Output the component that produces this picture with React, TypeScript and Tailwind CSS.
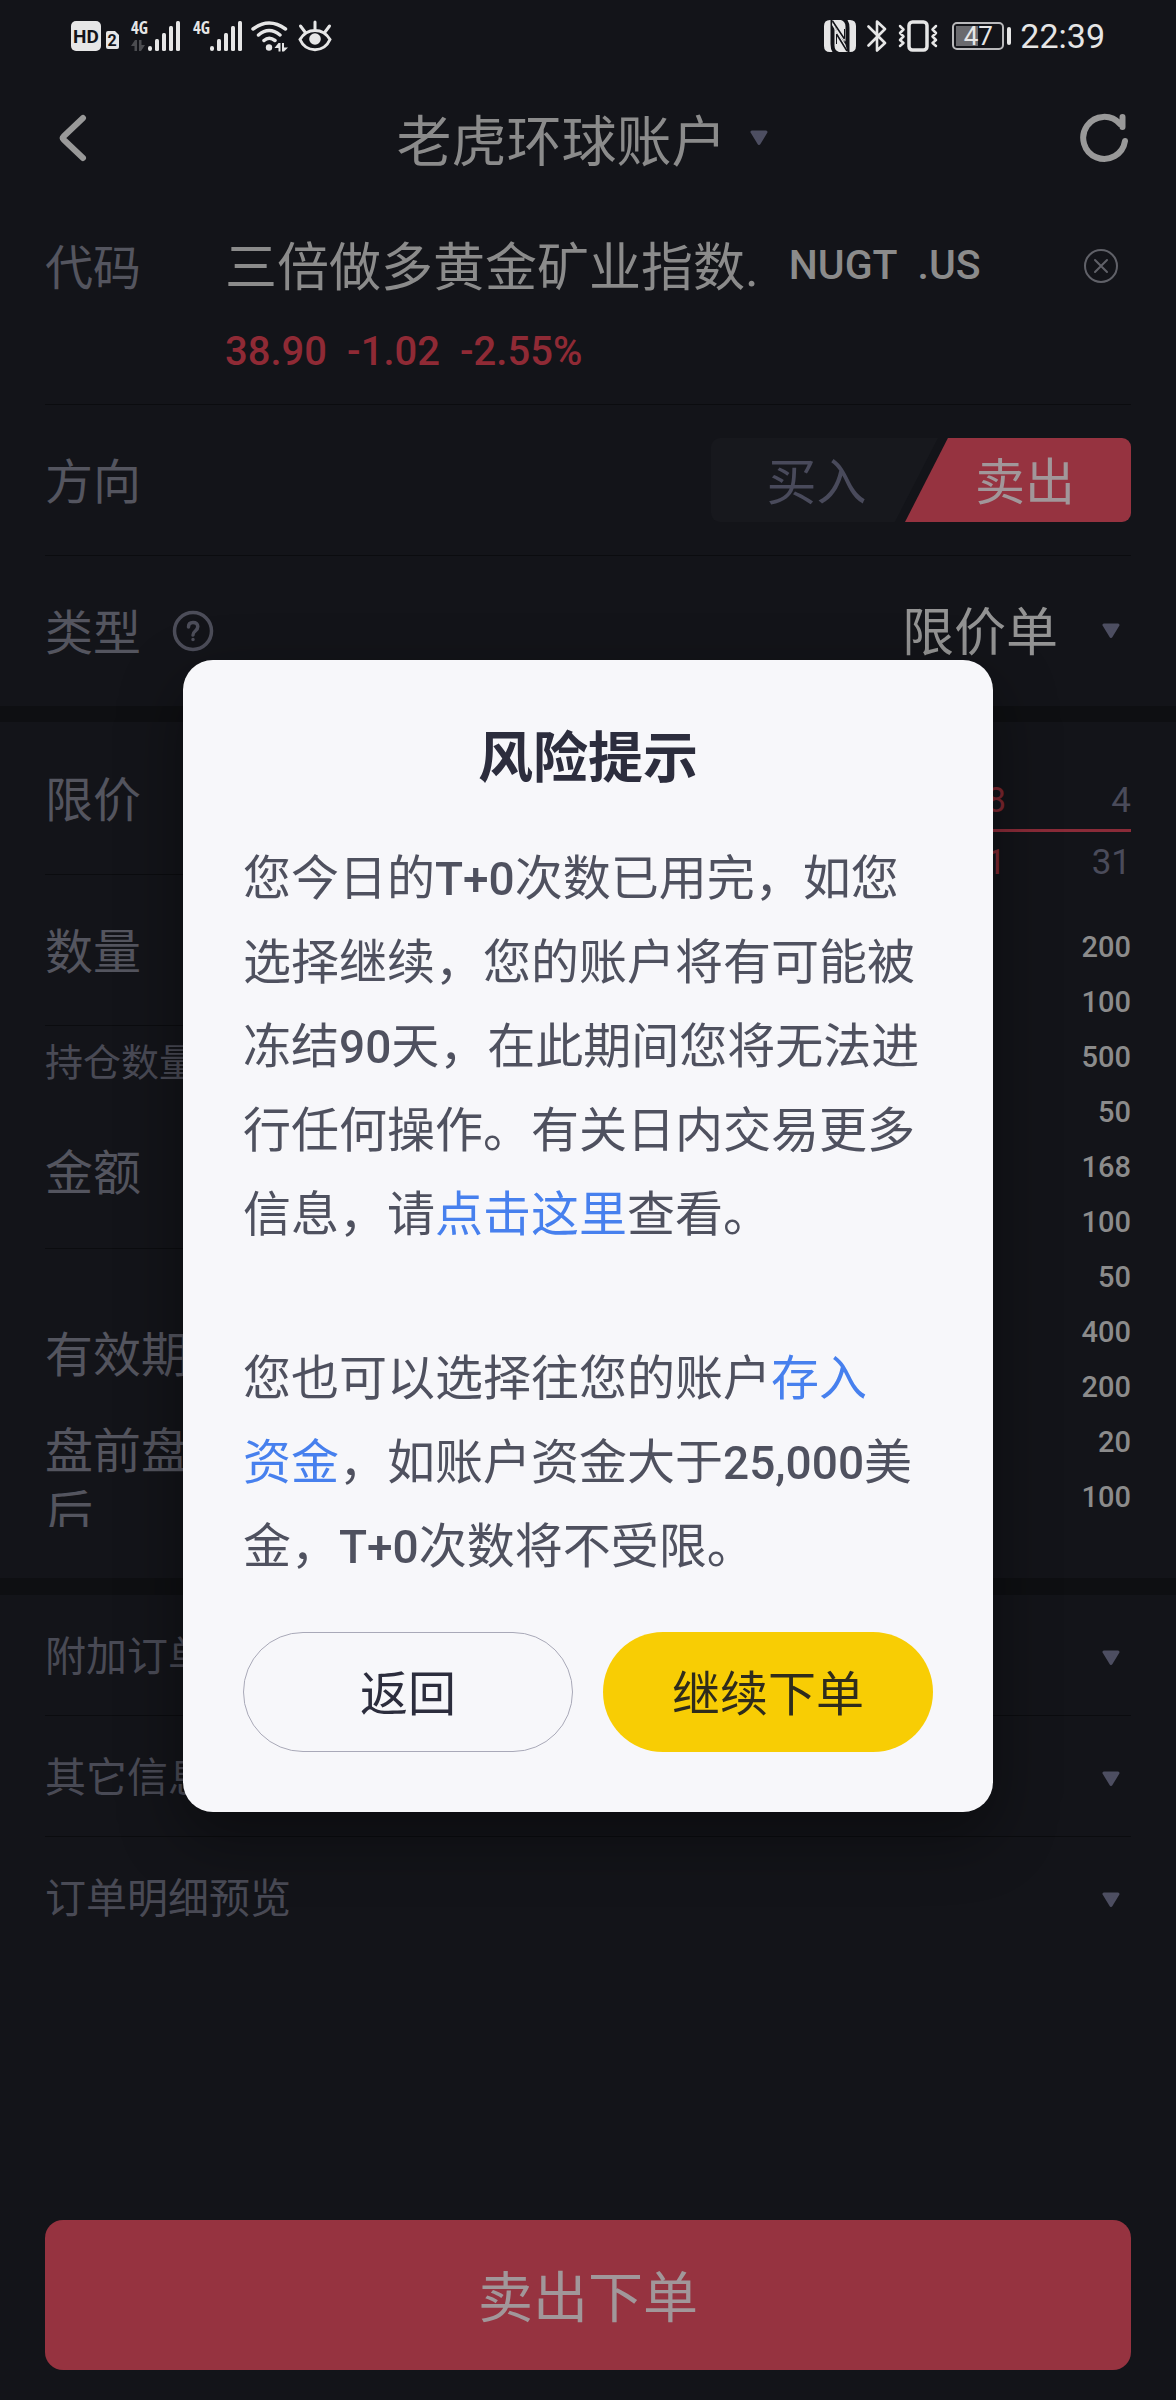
import type { ReactNode } from "react";

const bookSizes = [200, 100, 500, 50, 168, 100, 50, 400, 200, 20, 100];
const foldedSections = ["附加订单", "其它信息", "订单明细预览"];

function Caret() {
  return (
    <svg width="18" height="16" viewBox="0 0 18 16" className="shrink-0" aria-hidden="true">
      <path d="M2 2h14L9 13.5z" fill="#4d4e61" stroke="#4d4e61" strokeWidth="3" strokeLinejoin="round" />
    </svg>
  );
}

function Signal({ arrows = false }: { arrows?: boolean }) {
  return (
    <svg width="51" height="32" viewBox="0 0 51 32" className="overflow-visible" fill="#e6e6e6" aria-hidden="true">
      <text x="0" y="14" fontSize="17" fontWeight="700" fontFamily="'Open Sans Condensed', Roboto, sans-serif">
        4G
      </text>
      {arrows && <path d="M0 26l4-6h2v11H3.5v-5zM8 20h2.5v5h3.5l-4 6H8z" fill="#4b4c50" />}
      <rect x="17" y="26" width="4" height="5" rx="2" />
      <rect x="24" y="19" width="4" height="12" rx="1.5" />
      <rect x="31" y="13" width="4" height="18" rx="1.5" />
      <rect x="38" y="6" width="4" height="25" rx="1.5" />
      <rect x="45" y="1" width="4" height="30" rx="1.5" />
    </svg>
  );
}

function StatusBar() {
  return (
    <div className="flex h-[72px] items-center justify-between px-[71px] text-[#e6e6e6]">
      <div className="flex items-center">
        <svg width="49" height="32" viewBox="0 0 49 32" fill="#e6e6e6" aria-hidden="true">
          <rect x="0" y="1" width="30" height="30" rx="5" />
          <text x="15" y="23" fontSize="19" fontWeight="700" textAnchor="middle" fill="#131419">
            HD
          </text>
          <path d="M37 11h7l4 4v12a2 2 0 0 1-2 2h-9a2 2 0 0 1-2-2V13a2 2 0 0 1 2-2z" />
          <text x="41" y="26" fontSize="16" fontWeight="700" textAnchor="middle" fill="#131419">
            2
          </text>
        </svg>
        <div className="ml-[11px] flex gap-[11px]">
          <Signal arrows />
          <Signal />
        </div>
        <svg width="38" height="32" viewBox="0 0 38 32" className="ml-[7px]" fill="none" stroke="#e6e6e6" strokeWidth="3.5" strokeLinecap="round" aria-hidden="true">
          <path d="M2 9Q18 -3 34.5 9M7.5 15Q18 6 29 15M13 20.5Q18 16 24 20.5" />
          <circle cx="18" cy="27.5" r="3.2" fill="#e6e6e6" stroke="none" />
          <path d="M23.5 28l4-5h2v8.5h-2V28zM31 23h2v4.5h4L33 31.5h-2z" fill="#e6e6e6" stroke="none" />
        </svg>
        <svg width="34" height="32" viewBox="0 0 34 32" className="ml-[9px]" fill="none" stroke="#e6e6e6" strokeWidth="3" strokeLinecap="round" aria-hidden="true">
          <path d="M2 19.5C9 7.5 25 7.5 32 19.5C26 33 8 33 2 19.5z" />
          <path d="M17 9V2M7 12L2.5 6M27 12l4.5-6" />
          <circle cx="17" cy="19" r="5.8" fill="#e6e6e6" stroke="none" />
        </svg>
      </div>

      <div className="flex items-center">
        <svg width="32" height="32" viewBox="0 0 32 32" fill="#e6e6e6" aria-hidden="true">
          <path d="M6 0h.5v24q0 5 2 8H6q-6 0-6-6V6q0-6 6-6z" />
          <path d="M8.5 0h8.500q4.500 1.500 4.500 6.500V21.500L12 9z" />
          <path d="M10.500 8.500L23.500 32H15q-4.500-1.500-4.500-6.500z" />
          <path d="M8.500 0L12 9l9.500 15.500L23.500 32 18 22 8 5z" />
          <path d="M26 32h-.5V8q0-5-2-8H26q6 0 6 6v20q0 6-6 6z" />
          <path d="M13 12.500l7.500 9.500v-6L12.500 5.500z" />
          <path d="M12.500 14.500V24M20.500 18V9" stroke="#131419" strokeWidth="1" />
          <path d="M8.500 1L20.500 19M12.500 14L23 31" fill="none" stroke="#131419" strokeWidth="1.500" />
        </svg>
        <svg width="20" height="32" viewBox="0 0 20 32" className="ml-[11px]" fill="none" stroke="#e6e6e6" strokeWidth="2.6" strokeLinecap="round" strokeLinejoin="round" aria-hidden="true">
          <path d="M1.500 6.500L18 23l-8 7.500V1.500L18 9L1.500 25.500" />
        </svg>
        <svg width="40" height="32" viewBox="0 0 40 32" className="ml-[11px]" fill="none" stroke="#e6e6e6" strokeLinecap="round" strokeLinejoin="round" aria-hidden="true">
          <rect x="11" y="2" width="18" height="28" rx="3.5" strokeWidth="3.5" />
          <path d="M2 6l3.500 3.500L2 13l3.500 3.500L2 20l3.500 3L2 26M38 6l-3.500 3.500L38 13l-3.500 3.500L38 20l-3.500 3L38 26" strokeWidth="2.5" />
        </svg>
        <div className="ml-[14px] flex items-center gap-[3px]">
          <div className="relative flex h-[28px] w-[52px] items-center justify-center rounded-[5px] border-2 border-[#b9b9bb]">
            <span className="absolute top-[2px] bottom-[2px] left-[2px] w-[22px] bg-[#6a6a6e]" />
            <span className="relative text-[26px] leading-[24px]">47</span>
          </div>
          <span className="h-[18px] w-[4px] rounded-full bg-[#e6e6e6]" />
        </div>
        <span className="ml-[9px] text-[34px] leading-[40px]">22:39</span>
      </div>
    </div>
  );
}

function Label({ children }: { children: ReactNode }) {
  return <span className="pt-[5px] text-[48px] leading-[62px] text-[#54555f]">{children}</span>;
}

function RiskDialog() {
  return (
    <div className="fixed inset-0 flex items-center justify-center px-[183px] pt-[71px]">
      <section
        role="dialog"
        aria-modal="true"
        aria-labelledby="risk-title"
        className="w-full rounded-[30px] bg-[#f7f7fa] px-[60px] pt-[56px] pb-[60px] shadow-[0_24px_64px_rgba(0,0,0,0.4)]"
      >
        <h2 id="risk-title" className="text-center text-[55px] leading-[84px] font-bold text-[#2c2d3d]">
          风险提示
        </h2>
        <div className="mt-[37px] text-[48px] leading-[84px] text-[#4f515f]">
          <p>
            您今日的<span className="text-[46px] font-medium">T+0</span>次数已用完，如您选择继续，您的账户将有可能被冻结
            <span className="text-[46px] font-medium">90</span>天，在此期间您将无法进行任何操作。有关日内交易更多信息，请
            <a href="#day-trading" className="text-[#4780ee]">点击这里</a>查看。
          </p>
          <p className="mt-[80px]">
            您也可以选择往您的账户
            <a href="#deposit" className="text-[#4780ee]">
              存入
              <br />
              资金
            </a>
            ，如账户资金大于<span className="text-[46px] font-medium">25,000</span>美金，
            <span className="text-[46px] font-medium">T+0</span>次数将不受限。
          </p>
        </div>
        <div className="mt-[43px] grid grid-cols-2 gap-[30px] text-[48px] text-[#2c2d3d]">
          <button type="button" className="h-[120px] rounded-full border border-[#a9a9b8] pt-[6px]">
            返回
          </button>
          <button type="button" className="h-[120px] rounded-full bg-[#f8cd04] pt-[6px] text-[#2f2c1c]">
            继续下单
          </button>
        </div>
      </section>
    </div>
  );
}

export default function App() {
  return (
    <div className="flex min-h-screen flex-col bg-[#131419] font-[Roboto,'Noto_Sans_CJK_SC',sans-serif] text-[#8b8b8b]">
      <StatusBar />

      <header className="grid h-[132px] grid-cols-[1fr_auto_1fr] items-center px-[45px]">
        <button type="button" aria-label="返回上一页" className="ml-[12px] justify-self-start">
          <svg width="30" height="50" viewBox="0 0 30 50" fill="none" stroke="#999" strokeWidth="6" strokeLinecap="round" strokeLinejoin="round">
            <path d="M26 5L6.500 23.500Q5 25 6.500 26.500L26 45" />
          </svg>
        </button>
        <div className="flex items-center gap-[22px] pr-[12px]">
          <select aria-label="账户" className="appearance-none bg-transparent pt-[7px] text-[55px] leading-[80px]">
            <option>老虎环球账户</option>
          </select>
          <Caret />
        </div>
        <button type="button" aria-label="刷新" className="justify-self-end">
          <svg width="54" height="52" viewBox="0 0 54 52" fill="none" stroke="#999" strokeWidth="6" strokeLinecap="round">
            <path d="M48 29A21 21 0 1 1 43 12M45.500 5v10" strokeLinejoin="round" />
          </svg>
        </button>
      </header>

      <main className="flex flex-1 flex-col">
        <div className="px-[45px]">
          <div className="flex border-b border-[#0b0c0f] pt-[20px] pb-[12px]">
            <div className="flex h-[84px] w-[180px] items-center">
              <Label>代码</Label>
            </div>
            <div className="flex-1">
              <div className="flex h-[84px] items-center">
                <span className="pt-[5px] text-[52px] leading-[60px]">三倍做多黄金矿业指数.</span>
                <span className="ml-[30px] text-[41px] font-medium">NUGT</span>
                <span className="ml-[20px] text-[41px] font-medium">.US</span>
                <button type="button" aria-label="清除代码" className="mr-[12px] ml-auto">
                  <svg width="36" height="36" viewBox="0 0 36 36" fill="none" stroke="#606168" strokeWidth="2" strokeLinecap="round">
                    <circle cx="18" cy="18" r="16" />
                    <path d="M12 12l12 12M24 12L12 24" />
                  </svg>
                </button>
              </div>
              <div className="flex h-[84px] items-center gap-[20px] pt-[3px] text-[40px] font-medium text-[#8f2a35]">
                <span>38.90</span>
                <span>-1.02</span>
                <span>-2.55%</span>
              </div>
            </div>
          </div>

          <div className="flex h-[151px] items-center justify-between border-b border-[#0b0c0f]">
            <Label>方向</Label>
            <div className="flex h-[84px] text-[50px]">
              <button
                type="button"
                aria-pressed="false"
                className="w-[227px] rounded-l-[9px] bg-[#17181d] pt-[6px] pr-[16px] text-[#494a5b] [clip-path:polygon(0_0,100%_0,81%_100%,0_100%)]"
              >
                买入
              </button>
              <button
                type="button"
                aria-pressed="true"
                className="-ml-[33px] w-[226px] rounded-r-[9px] bg-[#963340] pt-[6px] pl-[14px] text-[#a1979a] [clip-path:polygon(19%_0,100%_0,100%_100%,0_100%)]"
              >
                卖出
              </button>
            </div>
          </div>

          <div className="flex h-[150px] items-center">
            <Label>类型</Label>
            <button type="button" aria-label="类型说明" className="ml-[31px]">
              <svg width="42" height="42" viewBox="0 0 42 42" fill="none" stroke="#4c4d59" strokeWidth="3.5" strokeLinecap="round">
                <circle cx="21" cy="21" r="18.5" />
                <path d="M16.500 17q0-4.500 4.500-4.500t4.800 4q0 2.500-2.500 4.500t-2.300 4M21 29.500v.1" />
              </svg>
            </button>
            <select aria-label="类型" className="ml-auto appearance-none bg-transparent pt-[6px] text-[52px] leading-[80px] text-[#939393]">
              <option>限价单</option>
            </select>
            <div className="mr-[11px] ml-[43px]">
              <Caret />
            </div>
          </div>
        </div>

        <div className="h-[16px] bg-[#0e0f12]" />

        <div className="flex px-[45px] pb-[51px]">
          <div className="flex-1">
            <div className="flex h-[153px] items-center border-b border-[#0b0c0f]">
              <Label>限价</Label>
            </div>
            <div className="flex h-[151px] items-center border-b border-[#0b0c0f]">
              <Label>数量</Label>
            </div>
            <div className="flex h-[74px] items-center text-[38px] text-[#494a55]">持仓数量</div>
            <div className="flex h-[149px] items-center border-b border-[#0b0c0f] pb-[5px]">
              <Label>金额</Label>
            </div>
            <div className="mt-[36px] flex h-[136px] items-center">
              <Label>有效期</Label>
            </div>
            <div className="h-[106px] w-[150px] overflow-hidden">
              <Label>盘前盘后</Label>
            </div>
          </div>

          <div className="flex-1 pt-[52px]">
            <div className="flex h-[58px] items-center justify-end border-b-3 border-[#8a2b38] text-[35px]">
              <span className="text-[#7d2730]">8</span>
              <span className="w-[125px] text-right text-[#4a4b5a]">4</span>
            </div>
            <div className="flex h-[62px] items-center justify-end text-[35px]">
              <span className="text-[#7d2730]">1</span>
              <span className="w-[125px] text-right text-[#4a4b5a]">31</span>
            </div>
            <ul className="mt-[26px] text-right text-[29px] leading-[55px] font-medium">
              {bookSizes.map((size, i) => (
                <li key={i}>{size}</li>
              ))}
            </ul>
          </div>
        </div>

        <div className="h-[17px] bg-[#0e0f12]" />

        <div className="px-[45px]">
          {foldedSections.map((title) => (
            <button
              key={title}
              type="button"
              aria-expanded="false"
              className="flex h-[121px] w-full items-center justify-between border-b border-[#0b0c0f] pt-[5px] pr-[11px] text-[41px] text-[#494a55] last:border-b-0"
            >
              {title}
              <Caret />
            </button>
          ))}
        </div>

        <div className="mt-auto px-[45px] pb-[30px]">
          <button type="button" className="h-[150px] w-full rounded-[18px] bg-[#963340] pt-[6px] text-[55px] text-[#a1979a]">
            卖出下单
          </button>
        </div>
      </main>

      <RiskDialog />
    </div>
  );
}
